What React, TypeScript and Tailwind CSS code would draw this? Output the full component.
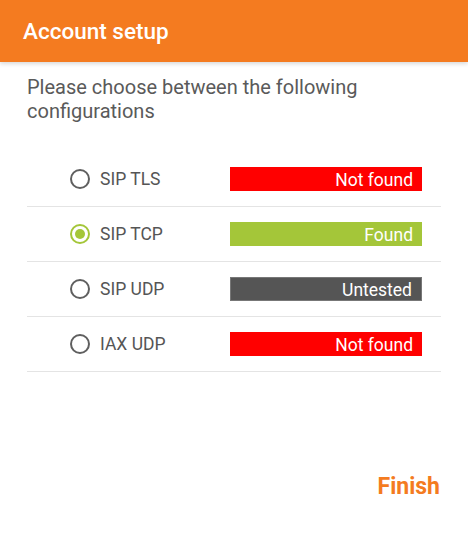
import React from "react";

const rows = [
  { label: "SIP TLS", status: "Not found", bg: "bg-[#ff0000]", checked: false },
  { label: "SIP TCP", status: "Found", bg: "bg-[#a4c639]", checked: true },
  { label: "SIP UDP", status: "Untested", bg: "bg-[#555555] border border-[#777]", checked: false },
  { label: "IAX UDP", status: "Not found", bg: "bg-[#ff0000]", checked: false },
];

function Radio({ checked }: { checked: boolean }) {
  return (
    <svg width="22" height="22" viewBox="0 0 22 22">
      <circle cx="11" cy="11" r="9" fill="none" stroke={checked ? "#a4c639" : "#5f5f5f"} strokeWidth="2" />
      {checked && <circle cx="11" cy="11" r="5" fill="#a4c639" />}
    </svg>
  );
}

export default function App() {
  return (
    <div className="w-[468px] h-[536px] bg-white flex flex-col" style={{ fontFamily: "Roboto, 'Noto Sans', sans-serif" }}>
      <div className="h-[62px] bg-[#f47b20] flex items-center pl-[23px] pt-[2px] shadow-[0_2px_4px_rgba(0,0,0,0.15)] relative z-10">
        <span className="text-white text-[22.5px] font-medium">Account setup</span>
      </div>
      <div className="px-[27px] pt-[13px]">
        <p className="text-[#5a5a5a] text-[20px] leading-[24px]">
          Please choose between the following configurations
        </p>
        <div className="mt-[29px] w-[414px]">
          {rows.map((r, i) => (
            <div key={i} className="h-[55px] flex items-center border-b border-[#e4e4e4]">
              <div className="ml-[42px] w-[22px] flex items-center">
                <Radio checked={r.checked} />
              </div>
              <span className="ml-[9px] text-[#555] text-[17.5px] w-[130px]">{r.label}</span>
              <div className={`w-[192px] h-[24px] ${r.bg} flex items-center justify-end pr-[9px]`}>
                <span className="text-white text-[17.5px] leading-[24px] pt-[2px]">{r.status}</span>
              </div>
            </div>
          ))}
        </div>
      </div>
      <div className="flex-1" />
      <div className="flex justify-end pr-[28px] pb-[32px]">
        <span className="text-[#f47b20] text-[23px] font-bold">Finish</span>
      </div>
    </div>
  );
}
